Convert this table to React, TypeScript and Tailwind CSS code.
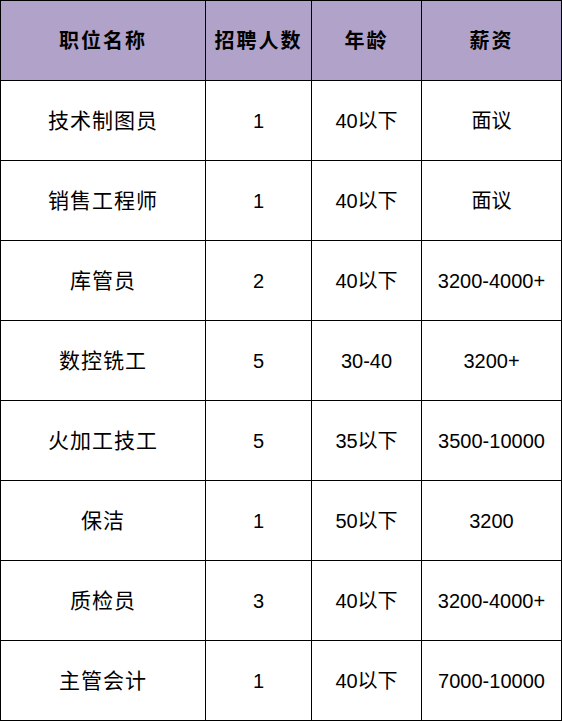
const rows = [
  { name: "技术制图员", count: "1", age: "40以下", pay: "面议" },
  { name: "销售工程师", count: "1", age: "40以下", pay: "面议" },
  { name: "库管员", count: "2", age: "40以下", pay: "3200-4000+" },
  { name: "数控铣工", count: "5", age: "30-40", pay: "3200+" },
  { name: "火加工技工", count: "5", age: "35以下", pay: "3500-10000" },
  { name: "保洁", count: "1", age: "50以下", pay: "3200" },
  { name: "质检员", count: "3", age: "40以下", pay: "3200-4000+" },
  { name: "主管会计", count: "1", age: "40以下", pay: "7000-10000" },
];

const font = { fontFamily: '"Liberation Sans", "Noto Sans CJK SC", sans-serif' };

export default function App() {
  return (
    <div className="w-[562px] h-[722px] bg-white text-black" style={font}>
      <table className="table-fixed border-collapse w-[561px]">
        <colgroup>
          <col className="w-[205px]" />
          <col className="w-[106px]" />
          <col className="w-[110px]" />
          <col className="w-[140px]" />
        </colgroup>
        <thead>
          <tr className="h-[80px] bg-[#b1a2c9]">
            {["职位名称", "招聘人数", "年龄", "薪资"].map((h) => (
              <th
                key={h}
                className="border border-black text-center text-[20px] font-bold tracking-[2px] p-0"
              >
                {h}
              </th>
            ))}
          </tr>
        </thead>
        <tbody>
          {rows.map((r) => (
            <tr key={r.name} className="h-[80px]">
              <td className="border border-black text-center text-[21px] tracking-[1px] p-0">{r.name}</td>
              <td className="border border-black text-center text-[20px] p-0">{r.count}</td>
              <td className="border border-black text-center text-[20px] p-0">{r.age}</td>
              <td className="border border-black text-center text-[20px] p-0">{r.pay}</td>
            </tr>
          ))}
        </tbody>
      </table>
    </div>
  );
}
